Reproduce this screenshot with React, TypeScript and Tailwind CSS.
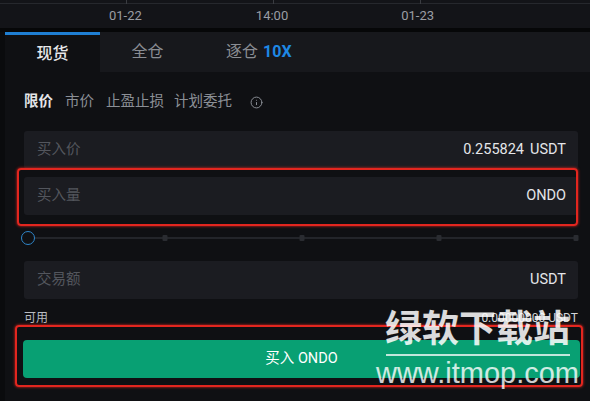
import { Info } from "lucide-react";

const font = { fontFamily: 'Roboto, "Noto Sans CJK SC", sans-serif' };

const Field = ({ label, value, unit }: { label: string; value?: string; unit: string }) => (
  <div className="flex items-center justify-between h-[38px] rounded-[3px] bg-[#1b1c21] pl-[13px] pr-[12px] text-[14.5px]">
    <span className="text-[#53565d]">{label}</span>
    <span className="text-[#e4e6e9]">
      {value && <span className="mr-[6px]">{value}</span>}
      {unit}
    </span>
  </div>
);

const Slider = () => (
  <div className="relative h-[14px] ml-[4px] mr-[2px]">
    <div className="absolute left-0 right-0 top-[6px] h-[2px] bg-[#23252a]" />
    {[25, 50, 75, 100].map((p) => (
      <div
        key={p}
        className="absolute top-[4px] w-[5px] h-[6px] -translate-x-1/2 rounded-[1px] bg-[#2a2c31]"
        style={{ left: `${p}%` }}
      />
    ))}
    <div className="absolute left-0 top-0 w-[14px] h-[14px] -translate-x-1/2 rounded-full border-[1.5px] border-[#2f86c9] bg-[#0f1013]" />
  </div>
);

export default function App() {
  return (
    <div className="relative w-[590px] h-[401px] overflow-hidden bg-[#0a0b0d] flex flex-col" style={font}>
      {/* chart time axis */}
      <div className="relative h-[28px] bg-[#131418] text-[13px] text-[#9a9da3]">
        <div className="absolute left-[126px] top-0 w-px h-[4px] bg-[#3a3c41]" />
        <div className="absolute left-[273px] top-0 w-px h-[4px] bg-[#3a3c41]" />
        <div className="absolute left-[420px] top-0 w-px h-[4px] bg-[#3a3c41]" />
        <div className="h-[3px]" />
        <div className="h-px bg-[#26282d]" />
        <div className="flex h-[24px] items-center">
          <span className="ml-[109px]">01-22</span>
          <span className="ml-[114px]">14:00</span>
          <span className="ml-[113px]">01-23</span>
        </div>
      </div>
      <div className="h-[4px] bg-[#060708]" />

      <div className="ml-[5px] flex-1 flex flex-col bg-[#0f1013]">
        {/* tabs */}
        <div className="flex h-[40px] bg-[#17181c] text-[16px]">
          <div className="w-[95px] flex items-center justify-center bg-[#0f1013] border-t-[3px] border-[#1f7fd3] text-[#e6e7ea] font-medium">
            现货
          </div>
          <div className="w-[95px] flex items-center justify-center text-[#8a8d93]">全仓</div>
          <div className="ml-[31px] flex items-center text-[#8a8d93]">
            逐仓 <span className="ml-[5px] font-bold text-[#1e88e5]">10X</span>
          </div>
        </div>

        <div className="flex flex-col pl-[19px] pr-[12px]">
          {/* order type */}
          <div className="mt-[22px] flex items-center h-[16px] text-[14.5px] text-[#8b8f96]">
            <span className="font-bold text-[#e4e5e8]">限价</span>
            <span className="ml-[12px]">市价</span>
            <span className="ml-[12px]">止盈止损</span>
            <span className="ml-[10px]">计划委托</span>
            <Info className="ml-[18px] w-[13px] h-[13px] text-[#8b8f96]" strokeWidth={1.8} />
          </div>

          <div className="mt-[21px] flex flex-col gap-[8px]">
            <Field label="买入价" value="0.255824" unit="USDT" />
            <Field label="买入量" unit="ONDO" />
          </div>

          <div className="mt-[16px]">
            <Slider />
          </div>

          <div className="mt-[16px]">
            <Field label="交易额" unit="USDT" />
          </div>

          <div className="mt-[12px] flex items-center justify-between h-[14px] text-[12px] text-[#b9bcc1]">
            <span>可用</span>
            <span className="text-[#d4d6d9]">0.00000000 USDT</span>
          </div>

          <div className="mt-[15px] ml-[-1px] mr-[-2px] h-[38px] rounded-[4px] bg-[#08a073] flex items-center justify-center text-[14.5px] text-white">
            买入 ONDO
          </div>
        </div>
      </div>

      {/* red annotation boxes */}
      <div className="absolute left-[17px] top-[168px] w-[561px] h-[58px] rounded-[4px] border-[2.5px] border-[#e3261f] shadow-[0_0_3px_#e3261f]" />
      <div className="absolute left-[15px] top-[325px] w-[568px] h-[62px] rounded-[4px] border-[2.5px] border-[#e3261f] shadow-[0_0_3px_#e3261f]" />

      {/* watermark */}
      <div className="absolute left-[380px] top-[304px] w-[195px] flex flex-col items-center text-white/85 pointer-events-none whitespace-nowrap">
        <span className="text-[37px] leading-[44px] font-bold" style={{ fontFamily: '"Noto Sans CJK SC", sans-serif' }}>
          绿软下载站
        </span>
        <div className="w-[184px] h-[2px] bg-white/75 mt-[6px]" />
        <span className="text-[29px] leading-[32px] mt-[1px] text-white/80" style={{ fontFamily: '"Liberation Sans", sans-serif' }}>
          www.itmop.com
        </span>
      </div>
    </div>
  );
}
